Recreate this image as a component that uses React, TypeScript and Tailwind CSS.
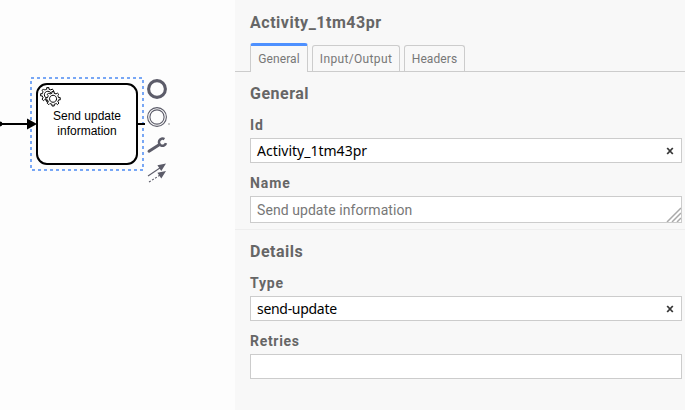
import React from 'react';

const GEAR =
  'v -1.71335 c 0.352326,-0.0705 0.703932,-0.17838 1.047628,-0.32133 0.344416,-0.14465 0.665822,-0.32133 0.966377,-0.52145 l 1.19431,1.18005 1.567487,-1.57688 -1.195028,-1.18014 c 0.403376,-0.61394 0.683079,-1.29908 0.825447,-2.01824 l 1.622133,-0.01 v -2.2196 l -1.636514,0.01 c -0.07333,-0.35153 -0.178319,-0.70024 -0.323564,-1.04372 -0.145244,-0.34406 -0.321407,-0.6644 -0.522735,-0.96217 l 1.131035,-1.13631 -1.583305,-1.56293 -1.129598,1.13589 c -0.614052,-0.40108 -1.302883,-0.68093 -2.022633,-0.82247 l 0.0093,-1.61852 h -2.241173 l 0.0042,1.63124 c -0.353763,0.0736 -0.705369,0.17977 -1.049785,0.32371 -0.344415,0.14437 -0.665102,0.32092 -0.9635006,0.52006 l -1.1698628,-1.15823 -1.5667691,1.5792 1.1684265,1.15669 c -0.4026573,0.61283 -0.68308,1.29797 -0.8247287,2.01713 l -1.6588041,0.003 v 2.22174 l 1.6724648,-0.006 c 0.073327,0.35077 0.1797598,0.70243 0.3242851,1.04472 0.1452428,0.34448 0.3214064,0.6644 0.5227339,0.96066 l -1.1993431,1.19723 1.5840256,1.56011 1.1964668,-1.19348 c 0.6140517,0.40346 1.3028827,0.68232 2.0233517,0.82331 l 7.19e-4,1.69892 h 2.226848 z m 0.221462,-3.9957 c -1.788948,0.7502 -3.8576,-0.0928 -4.6097055,-1.87438 -0.7521065,-1.78321 0.090598,-3.84627 1.8802645,-4.59604 1.78823,-0.74936 3.856881,0.0929 4.608987,1.87437 0.752106,1.78165 -0.0906,3.84612 -1.879546,4.59605 z';

function Diagram() {
  return (
    <svg width="235" height="410" viewBox="0 0 235 410" className="block shrink-0 bg-[#fdfdfd]">
      <rect x="37" y="84" width="100" height="80" rx="10" fill="#fff" stroke="#000" strokeWidth="2" />
      <g fill="#fff" stroke="#000" strokeWidth="1">
        <path d={`M49 102 ${GEAR}`} />
        <circle cx="53" cy="98.6" r="5" stroke="none" />
        <path d={`M54.2 106 ${GEAR}`} />
      </g>
      <g fontFamily="'Liberation Sans', Arial, sans-serif" fontSize="12" textAnchor="middle">
        <text x="87" y="120">Send update</text>
        <text x="87" y="135">information</text>
      </g>
      <rect x="31" y="78" width="112" height="92" fill="none" stroke="#78a7f5" strokeWidth="2" strokeDasharray="3 3" />
      <path d="M0 124H30M138 124H145" stroke="#000" strokeWidth="2" />
      <circle cx="0" cy="124" r="2.4" />
      <path d="M27 118.5L37 124L27 129.5Z" />
      <g fill="none" stroke="#5c5c69">
        <circle cx="157" cy="89" r="8.4" strokeWidth="3.1" />
        <circle cx="157" cy="117" r="9.4" strokeWidth="1.1" />
        <circle cx="157" cy="117" r="7.1" strokeWidth="1.1" />
        <path d="M149 151.2L158.8 145" strokeWidth="3" strokeLinecap="round" />
        <path d="M164.4 139.1A3.6 3.6 0 1 0 166 143.2" strokeWidth="2.5" />
        <path d="M148 176L161 167.3" strokeWidth="1.1" />
        <path d="M149 182L161 174.5" strokeWidth="1.1" strokeDasharray="2 1.6" />
      </g>
      <path d="M166 163.5L157.4 165.3L161.3 171Z M166 171L157.4 172.8L161.3 178.5Z" fill="#5c5c69" />
      <rect x="168" y="123" width="2" height="2" fill="#c9c9c9" />
    </svg>
  );
}

function Clear() {
  return (
    <svg width="8" height="8" viewBox="0 0 8 8" className="mr-[7px]">
      <path d="M1.2 1L6.8 7M6.8 1L1.2 7" stroke="#383838" strokeWidth="1.8" />
    </svg>
  );
}

function Label({ children, className }: { children: React.ReactNode; className: string }) {
  return <div className={`h-5 whitespace-nowrap font-bold text-[#666] ${className}`}>{children}</div>;
}

function Field({ children, clear }: { children?: React.ReactNode; clear?: boolean }) {
  return (
    <div className="flex h-[25px] items-center justify-between border border-[#ccc] bg-white pl-1.5 font-['Noto_Sans',sans-serif] text-[14px] text-black">
      <span className="whitespace-nowrap">{children}</span>
      {clear && <Clear />}
    </div>
  );
}

export default function App() {
  return (
    <div className="flex h-[410px] w-[685px] overflow-hidden bg-[#f8f8f8] font-[Roboto,sans-serif]">
      <Diagram />
      <div className="w-[450px] pt-3">
        <Label className="ml-[15px] text-[16px] leading-[22px] tracking-[0.52px]">Activity_1tm43pr</Label>
        <div className="mt-[11px] flex h-[29px] items-end gap-1 border-b border-[#ccc] pl-[15px] text-[12px] tracking-[0.1px] text-[#777]">
          <div className="-mb-px flex h-[29px] w-[58px] items-center justify-center rounded-t-[3px] border border-t-[3px] border-b-0 border-[#ccc] border-t-[#4d90ff] bg-[#f8f8f8]">General</div>
          <div className="flex h-[26px] w-[88px] items-center justify-center rounded-t-[3px] border border-b-0 border-[#ccc] pt-px tracking-[0.35px]">Input/Output</div>
          <div className="flex h-[26px] w-[61px] items-center justify-center rounded-t-[3px] border border-b-0 border-[#ccc] pt-px">Headers</div>
        </div>
        <div className="h-[158px] border-b border-[#eee] pl-[15px] pr-[3px] pt-[11px]">
          <Label className="text-[16px] leading-[22px] tracking-[0.5px]">General</Label>
          <Label className="mt-3 text-[14px] leading-5 tracking-[0.8px]">Id</Label>
          <div className="mt-[3px]"><Field clear>Activity_1tm43pr</Field></div>
          <Label className="mt-2.5 text-[14px] leading-5 tracking-[0.9px]">Name</Label>
          <div className="mt-[3px] flex h-[27px] items-center justify-between border border-[#ccc] bg-white pl-1.5 text-[14px] text-[#777]">
            <span className="pt-0.5 tracking-[0.07px]">Send update information</span>
            <svg width="15" height="15" viewBox="0 0 15 15" className="self-end">
              <path d="M1 15L15 1M6 15L15 6M11 15L15 11" stroke="#aaa" strokeWidth="1.5" />
            </svg>
          </div>
        </div>
        <div className="pl-[15px] pr-[3px] pt-[11px]">
          <Label className="text-[16px] leading-[22px] tracking-[0.5px]">Details</Label>
          <Label className="mt-3 text-[14px] leading-5 tracking-[0.8px]">Type</Label>
          <div className="mt-[3px]"><Field clear><span className="tracking-[-0.3px]">send-update</span></Field></div>
          <Label className="mt-2.5 text-[14px] leading-5 tracking-[0.7px]">Retries</Label>
          <div className="mt-[3px]"><Field /></div>
        </div>
      </div>
    </div>
  );
}
